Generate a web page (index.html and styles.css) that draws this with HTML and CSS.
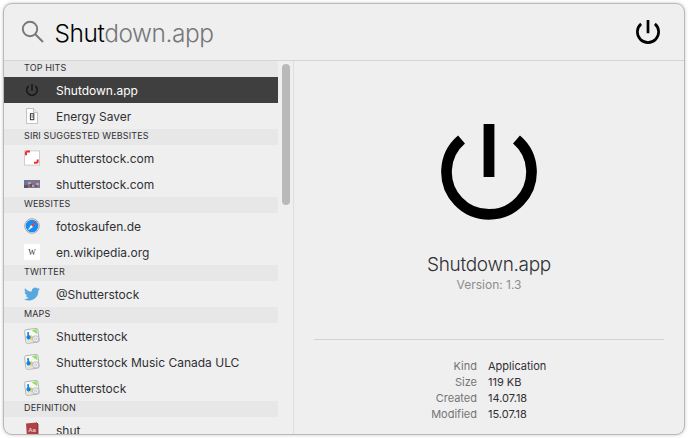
FILE: index.html
```
<!DOCTYPE html>
<html lang="en">
<head>
<meta charset="utf-8">
<title>Search</title>
<link rel="stylesheet" href="styles.css">
</head>
<body>
<svg class="defs" aria-hidden="true">
  <symbol id="power" viewBox="0 0 96 96">
    <path d="M20.5 15.5A42.5 42.5 0 1 0 75.5 15.5" fill="none" stroke="currentColor" stroke-width="10.7"/>
    <path d="M42.6 0h10.8v53H42.6z" fill="currentColor"/>
  </symbol>
  <symbol id="map" viewBox="0 0 16 16">
    <g transform="rotate(-7 8 8)">
      <rect x="1.2" y="1" width="13.4" height="13.800" rx="1.8" fill="#f8f8f5" stroke="#a8a8a8" stroke-width=".8"/>
      <path d="M8.500 2.500l3-.5h2v5z" fill="#8ee45f"/>
      <path d="M2 10.500l4-1.500 7 3v2H2z" fill="#dde5dc"/>
      <path d="M6.800 6.500l2.700 2.500-1.500 3-2.200-.6z" fill="#f5d23e"/>
      <path d="M3.600 3.600h1.700v3.200a2.200 2.200 0 1 1-1.700 0z" fill="#1680e8"/>
      <circle cx="11.300" cy="11.300" r="3.100" fill="#f3f6f8" stroke="#a4b1ba" stroke-width=".8"/>
      <circle cx="11.300" cy="11.300" r="1.100" fill="none" stroke="#a4b1ba" stroke-width=".6"/>
    </g>
  </symbol>
</svg>
<main class="window">
  <header class="search">
    <svg class="lens" viewBox="0 0 24 24"><circle cx="9" cy="9" r="7.2"/><path d="M14 14l8 8"/></svg>
    <div class="query"><span class="typed">Shut</span><span class="hint">down.app</span></div>
    <svg class="app-icon"><use href="#power"/></svg>
  </header>
  <div class="content">
    <section class="results">
      <div class="list">
        <h2>TOP HITS</h2>
        <div class="row selected"><svg class="icon small"><use href="#power"/></svg><span>Shutdown.app</span></div>
        <div class="row"><svg class="icon" viewBox="0 0 16 16"><path d="M2.5.5h7l4 4v11h-11z" fill="#fff" stroke="#b5b5b5" stroke-width=".8"/><path d="M9.5.5v4h4" fill="#eee" stroke="#b5b5b5" stroke-width=".8"/><rect x="6.4" y="5.7" width="3.4" height="6" fill="#fff" stroke="#333" stroke-width="1"/><path d="M8.1 7v3" stroke="#777"/></svg><span>Energy Saver</span></div>
        <h2>SIRI SUGGESTED WEBSITES</h2>
        <div class="row"><svg class="icon" viewBox="0 0 16 16"><rect x=".4" y=".9" width="15.2" height="14.2" fill="#fff" stroke="#c4c4c4" stroke-width=".8"/><path d="M2 5.2V3q0-1.5 1.500-1.500H6M10 12.800h2.200q1.500 0 1.500-1.500V9.500" fill="none" stroke="#ec2b32" stroke-width="2"/></svg><span>shutterstock.com</span></div>
        <div class="row"><svg class="icon" viewBox="0 0 16 16"><path d="M0 4h16v8H0z" fill="#81738b"/><path d="M0 4h5v2H3v3H0zM8 7h3v1H8z" fill="#6176a5"/><path d="M4 6h3v2H4zM12 7h3v2h-3zM8 9h2v2H8z" fill="#b5a4ab"/><path d="M0 9h4v3H0zM6 8h2v3H6zM11 9h2v2h-2z" fill="#66505c"/></svg><span>shutterstock.com</span></div>
        <h2>WEBSITES</h2>
        <div class="row"><svg class="icon" viewBox="0 0 16 16"><circle cx="8" cy="8" r="7.300" fill="#e9e9e9" stroke="#999" stroke-width=".8"/><circle cx="8" cy="8" r="6.300" fill="#188cf2"/><path d="M12.500 3.300L9 9 7 7z" fill="#f04333"/><path d="M3.500 12.700L9 9 7 7z" fill="#f3f7fb"/></svg><span>fotoskaufen.de</span></div>
        <div class="row"><svg class="icon" viewBox="0 0 16 16"><path d="M0 0h16v16H0z" fill="#fff"/><text class="wiki" x="8" y="11">W</text></svg><span>en.wikipedia.org</span></div>
        <h2>TWITTER</h2>
        <div class="row"><svg class="icon" viewBox="0 0 24 24"><path fill="#58a8df" d="M24 4.600a10 10 0 0 1-2.800.8 5 5 0 0 0 2.100-2.700 10 10 0 0 1-3.100 1.200 4.900 4.900 0 0 0-8.400 4.500A14 14 0 0 1 1.700 3.200a4.900 4.900 0 0 0 1.500 6.500 5 5 0 0 1-2.200-.6v.1a4.900 4.900 0 0 0 3.900 4.800 5 5 0 0 1-2.200.1 4.900 4.900 0 0 0 4.600 3.400A10 10 0 0 1 0 19.500 14 14 0 0 0 21.500 7.100 10 10 0 0 0 24 4.600z"/></svg><span>@Shutterstock</span></div>
        <h2>MAPS</h2>
        <div class="row"><svg class="icon"><use href="#map"/></svg><span>Shutterstock</span></div>
        <div class="row"><svg class="icon"><use href="#map"/></svg><span>Shutterstock Music Canada ULC</span></div>
        <div class="row"><svg class="icon"><use href="#map"/></svg><span>shutterstock</span></div>
        <h2>DEFINITION</h2>
        <div class="row"><svg class="icon" viewBox="0 0 16 16"><path d="M2 1.500L12.700.5 14 2v13.500H3z" fill="#ad4143"/><path d="M12.500.5L14 2v13.500" fill="none" stroke="#7f2b2e" stroke-width=".8"/><text class="aa" x="8" y="9.600">Aa</text></svg><span>shut</span></div>
      </div>
      <div class="track"><div class="thumb"></div></div>
    </section>
    <section class="preview">
      <svg class="hero"><use href="#power"/></svg>
      <h1>Shutdown.app</h1>
      <p class="version">Version: 1.3</p>
      <dl class="meta">
        <dt>Kind</dt><dd>Application</dd>
        <dt>Size</dt><dd>119 KB</dd>
        <dt>Created</dt><dd>14.07.18</dd>
        <dt>Modified</dt><dd>15.07.18</dd>
      </dl>
    </section>
  </div>
</main>
</body>
</html>
```
FILE: styles.css
```
* { box-sizing: border-box; }
body { margin: 0; padding: 4px; height: 438px; overflow: hidden; background: #fff; font-family: Inter, "Liberation Sans", sans-serif; color: #303035; }
.defs { position: absolute; width: 0; height: 0; }
.window { width: 680px; height: 430px; display: flex; flex-direction: column; overflow: hidden; border-radius: 8px; background: #efefef; box-shadow: 0 0 0 1px #b9b9b9, 0 0 4px rgba(0,0,0,.35); }
.search { height: 57px; flex: none; display: flex; align-items: center; padding: 0 24px 0 17px; border-bottom: 1px solid #d5d5d5; }
.lens { width: 24px; height: 24px; flex: none; fill: none; stroke: #777; stroke-width: 1.9; }
.query { flex: 1; margin-left: 9.5px; padding-top: 1px; font-size: 24.5px; line-height: 30px; font-weight: 300; letter-spacing: -.45px; white-space: nowrap; }
.typed { color: #000; }
.hint { color: #77777a; }
.app-icon { width: 24px; height: 24px; color: #000; }
.content { display: flex; height: 373px; }
.results { width: 290px; flex: none; display: flex; border-right: 1px solid #dfdfdf; overflow: hidden; }
.list { width: 274px; }
h2 { margin: 0; height: 16px; padding-left: 20px; background: #e7e7e7; font-size: 9px; line-height: 14px; font-weight: 400; letter-spacing: .13px; white-space: nowrap; }
.row { height: 26px; display: flex; align-items: center; padding-left: 20px; font-size: 12px; line-height: 24px; letter-spacing: 0; white-space: nowrap; }
.row span { padding-top: 2px; }
.icon { width: 16px; height: 16px; flex: none; margin-right: 16px; }
.small { width: 12px; height: 12px; margin: 0 18px 0 2px; color: #111; }
.selected { background: #3f3f3f; color: #fff; }
.wiki { font: 8px "Liberation Serif", serif; text-anchor: middle; fill: #333; }
.aa { font: bold 6px "Liberation Sans", sans-serif; text-anchor: middle; fill: #ecc; }
.track { padding: 3px 0 0 4px; }
.thumb { width: 8px; height: 141px; border-radius: 4px; background: #b9b9b9; }
.preview { flex: 1; display: flex; flex-direction: column; align-items: center; padding: 63px 20px 0; }
.hero { width: 96px; height: 96px; flex: none; color: #000; }
h1 { margin: 33px 0 0; font-size: 19px; line-height: 24px; font-weight: 300; letter-spacing: -.3px; }
.version { margin: -1px 0 0; font-size: 12px; line-height: 18px; color: #8d8d8d; }
.meta { width: 350px; margin: 45px 0 0; padding-top: 18px; border-top: 1px solid #d3d3d3; display: grid; grid-template-columns: 163px 1fr; column-gap: 11px; grid-auto-rows: 16px; font-size: 11px; line-height: 16px; }
dt { text-align: right; color: #747476; }
dd { margin: 0; }
```
